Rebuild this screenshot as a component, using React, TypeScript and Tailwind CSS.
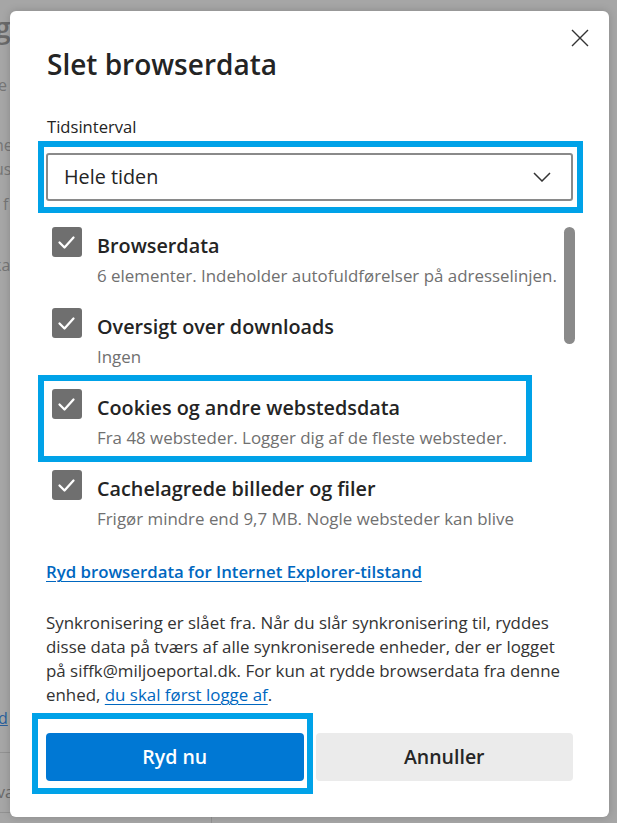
import React from "react";

function Check() {
  return (
    <div className="flex h-[30px] w-[30px] shrink-0 items-center justify-center rounded-[3px] bg-[#6f6f6f]">
      <svg width="30" height="30" viewBox="0 0 30 30" fill="none">
        <polyline points="7.5,15.5 12.5,20.5 21.5,10.5" stroke="#ffffff" strokeWidth="2.3" strokeLinecap="round" strokeLinejoin="round" />
      </svg>
    </div>
  );
}

function Item({ title, lines }: { title: string; lines: string[] }) {
  return (
    <div className="flex gap-[15px]">
      <Check />
      <div className="flex flex-col">
        <div className="mt-[6px] whitespace-nowrap text-[19.8px] font-semibold leading-[26px] text-[#242424]">{title}</div>
        <div className="mt-[6px] flex flex-col">
          {lines.map((l) => (
            <div key={l} className="whitespace-nowrap text-[16.9px] leading-[22px] text-[#707070]">
              {l}
            </div>
          ))}
        </div>
      </div>
    </div>
  );
}

function Backdrop() {
  return (
    <div className="absolute inset-0 bg-[#a6a6a6]">
      <span className="absolute left-[-5px] top-[9px] text-[28px] font-semibold leading-[36px] text-[#6a6a6a]">g</span>
      <span className="absolute left-[-2px] top-[74px] text-[16px] leading-[22px] text-[#767676]">e</span>
      <span className="absolute left-[-6px] top-[134px] text-[16px] leading-[22px] text-[#767676]">ne</span>
      <span className="absolute left-[-6px] top-[158px] text-[16px] leading-[22px] text-[#767676]">us</span>
      <span className="absolute left-[3px] top-[193px] text-[16px] leading-[22px] text-[#767676]">f</span>
      <span className="absolute left-[-7px] top-[254px] text-[16px] leading-[22px] text-[#767676]">ka</span>
      <span className="absolute left-[-2px] top-[707px] text-[16px] leading-[22px] text-[#2a5f9c] underline">d</span>
      <div className="absolute left-0 top-[752px] h-[1px] w-[12px] bg-[#929292]" />
      <span className="absolute left-[-3px] top-[781px] text-[16px] leading-[22px] text-[#6a6a6a]">va</span>
      <div className="absolute left-0 top-[812px] h-[1px] w-[12px] bg-[#929292]" />
      <div className="absolute left-[211px] top-[740px] h-[83px] w-[1px] bg-[#939393]" />
    </div>
  );
}

export default function App() {
  return (
    <div className="relative h-[823px] w-[617px] overflow-hidden font-['Open_Sans',sans-serif]">
      <Backdrop />
      <div className="relative pl-[10px] pt-[11px]">
        <div className="relative flex h-[806px] w-[599px] flex-col rounded-[6px] bg-white shadow-[0_0_8px_rgba(0,0,0,0.18)]">
          {/* header */}
          <div className="flex items-start justify-between pl-[37px] pr-[20px] pt-[18px]">
            <h1 className="mt-[17px] text-[28px] font-semibold leading-[36px] text-[#242424]">Slet browserdata</h1>
            <svg width="18" height="18" viewBox="0 0 18 18" fill="none">
              <path d="M1 1L17 17M17 1L1 17" stroke="#333333" strokeWidth="1.4" />
            </svg>
          </div>

          <div className="flex flex-col pl-[36px] pr-[36px]">
            <div className="mt-[33px] pl-[1px] text-[16.6px] leading-[24px] text-[#242424]">Tidsinterval</div>

            {/* dropdown */}
            <div className="relative mt-[14px]">
              <div className="flex h-[48px] items-center justify-between rounded-[3px] border-2 border-[#8a8a8a] pl-[16px] pr-[20px]">
                <span className="text-[19.8px] text-[#242424]">Hele tiden</span>
                <svg width="18" height="10" viewBox="0 0 18 10" fill="none">
                  <polyline points="1,1 9,9 17,1" stroke="#333333" strokeWidth="1.5" />
                </svg>
              </div>
              <div className="pointer-events-none absolute left-[-8px] top-[-12px] h-[72px] w-[545px] border-[6px] border-[#00a2e8]" />
            </div>

            {/* list */}
            <div className="relative mr-[-2px] mt-[21px] flex h-[313px] justify-between overflow-hidden">
              <div className="flex flex-col gap-[21px] pl-[6px] pt-[5px]">
                <Item title="Browserdata" lines={["6 elementer. Indeholder autofuldførelser på adresselinjen."]} />
                <Item title="Oversigt over downloads" lines={["Ingen"]} />
                <Item title="Cookies og andre webstedsdata" lines={["Fra 48 websteder. Logger dig af de fleste websteder."]} />
                <Item
                  title="Cachelagrede billeder og filer"
                  lines={["Frigør mindre end 9,7 MB. Nogle websteder kan blive", "langsommere at indlæse ved dit næste besøg."]}
                />
              </div>
              <div className="mt-[5px] h-[117px] w-[11px] shrink-0 rounded-full bg-[#8a8a8a]" />
            </div>

            <a className="mt-[25px] self-start whitespace-nowrap text-[16.8px] font-semibold leading-[24px] text-[#0067c0] underline decoration-1 underline-offset-[3px]">
              Ryd browserdata for Internet Explorer-tilstand
            </a>

            <div className="mt-[27px] flex flex-col text-[16.9px] leading-[24px] text-[#333333]">
              <span className="whitespace-nowrap">Synkronisering er slået fra. Når du slår synkronisering til, ryddes</span>
              <span className="whitespace-nowrap">disse data på tværs af alle synkroniserede enheder, der er logget</span>
              <span className="whitespace-nowrap">på siffk@miljoeportal.dk. For kun at rydde browserdata fra denne</span>
              <span className="whitespace-nowrap">
                enhed, <a className="text-[#0067c0] underline decoration-1 underline-offset-[3px]">du skal først logge af</a>.
              </span>
            </div>

            {/* buttons */}
            <div className="mt-[26px] grid grid-cols-2 gap-[12px]">
              <div className="relative">
                <button className="flex h-[48px] w-full items-center justify-center rounded-[4px] bg-[#0078d4] text-[19.5px] font-semibold text-white">
                  Ryd nu
                </button>
                <div className="pointer-events-none absolute left-[-14px] top-[-20px] h-[81px] w-[281px] border-[6px] border-[#00a2e8]" />
              </div>
              <button className="flex h-[48px] w-full items-center justify-center rounded-[4px] bg-[#ebebeb] text-[19.5px] font-semibold text-[#262626]">
                Annuller
              </button>
            </div>
          </div>

          {/* cookies highlight overlay */}
          <div className="pointer-events-none absolute left-[28px] top-[364px] h-[87px] w-[494px] border-[6px] border-[#00a2e8]" />
        </div>
      </div>
    </div>
  );
}
